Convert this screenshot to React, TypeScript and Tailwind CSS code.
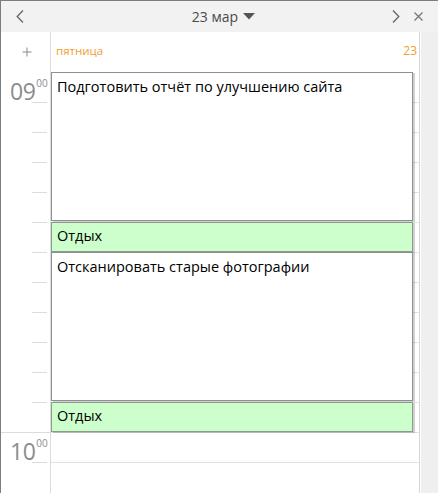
import React from "react";

const font = { fontFamily: '"Open Sans", "Noto Sans", sans-serif' };

function Gutter() {
  const rows = Array.from({ length: 14 }, (_, i) => i);
  return (
    <div className="w-[50px] border-r border-[#dcdcdc] flex flex-col shrink-0">
      <div className="h-[40px] flex items-center justify-center shrink-0">
        <svg width="10" height="10" viewBox="0 0 10 10" className="ml-[2px]">
          <path d="M5 0.5V9.5M0.5 5H9.5" stroke="#8a8a8a" strokeWidth="1" />
        </svg>
      </div>
      {rows.map((i) => {
        const hour = i === 0 || i === 12;
        return (
          <div key={i} className="h-[30px] shrink-0 relative">
            {i === 12 ? (
              <div className="h-px bg-[#dcdcdc] w-full" />
            ) : i === 0 ? null : (
              <div className="h-px bg-[#dcdcdc] w-[15px] ml-[31px]" />
            )}
            {hour && (
              <div className="absolute left-[9px] top-[4px] flex items-start text-[#8c8c8c]">
                <span className="text-[23px] leading-[30px] tracking-[-0.5px]">{i === 0 ? "09" : "10"}</span>
                <span className="text-[10px] leading-[10px] ml-[1px] mt-[2px]">00</span>
              </div>
            )}
          </div>
        );
      })}
    </div>
  );
}

function MainCol() {
  const rows = Array.from({ length: 14 }, (_, i) => i);
  return (
    <div className="flex-1 flex flex-col relative border-r border-[#d6d6d6]">
      <div className="h-[40px] flex items-center justify-between pl-[5px] pr-[2px] shrink-0 text-[#f0a030]">
        <span className="text-[11.5px] mt-[-2px]">пятница</span>
        <span className="text-[12px] mt-[-2px]">23</span>
      </div>
      <div className="relative">
        {rows.map((i) => (
          <div key={i} className="h-[30px] border-t border-[#e2e2e2] first:border-t-0" />
        ))}
        <div className="absolute left-0 top-0 w-[362px] flex flex-col">
          <div className="h-[149px] mb-px bg-white border border-[#8f8f8f] shadow-[2px_1px_0_rgba(0,0,0,0.18)] px-[5px] pt-[3px] text-[14.5px] text-black">
            Подготовить отчёт по улучшению сайта
          </div>
          <div className="h-[30px] bg-[#ccffcc] border border-[#8f9a8f] shadow-[2px_1px_0_rgba(0,0,0,0.18)] px-[5px] pt-[3px] text-[14.5px] leading-[20px] text-black">
            Отдых
          </div>
          <div className="h-[149px] mb-px bg-white border border-[#8f8f8f] shadow-[2px_1px_0_rgba(0,0,0,0.18)] px-[5px] pt-[3px] text-[14.5px] text-black">
            Отсканировать старые фотографии
          </div>
          <div className="h-[30px] bg-[#ccffcc] border border-[#8f9a8f] shadow-[2px_1px_0_rgba(0,0,0,0.18)] px-[5px] pt-[3px] text-[14.5px] leading-[20px] text-black">
            Отдых
          </div>
        </div>
      </div>
    </div>
  );
}

export default function App() {
  return (
    <div
      className="w-[438px] h-[493px] border-l border-t border-[#7d7d7d] flex flex-col overflow-hidden bg-white"
      style={font}
    >
      <div className="h-[31px] shrink-0 bg-[#f2f2f2] flex items-center relative">
        <svg width="8" height="13" viewBox="0 0 8 13" className="absolute left-[15px] top-[9px]">
          <path d="M7 0.5L1.2 6.5L7 12.5" stroke="#666" strokeWidth="1.3" fill="none" />
        </svg>
        <div className="flex-1 flex items-center justify-center gap-[5px] text-[14px] text-[#4a4a4a] ml-[8px]">
          <span>23 мар</span>
          <svg width="12" height="7" viewBox="0 0 12 7">
            <path d="M0 0H12L6 6.5Z" fill="#555" />
          </svg>
        </div>
        <svg width="8" height="13" viewBox="0 0 8 13" className="absolute left-[391px] top-[9px]">
          <path d="M1 0.5L6.8 6.5L1 12.5" stroke="#666" strokeWidth="1.3" fill="none" />
        </svg>
        <svg width="9" height="9" viewBox="0 0 9 9" className="absolute left-[413px] top-[11px]">
          <path d="M0.5 0.5L8.5 8.5M8.5 0.5L0.5 8.5" stroke="#777" strokeWidth="1.3" />
        </svg>
      </div>
      <div className="flex-1 flex min-h-0">
        <Gutter />
        <MainCol />
        <div className="w-[18px] shrink-0 border-l border-white bg-[#efefef]" />
      </div>
    </div>
  );
}
